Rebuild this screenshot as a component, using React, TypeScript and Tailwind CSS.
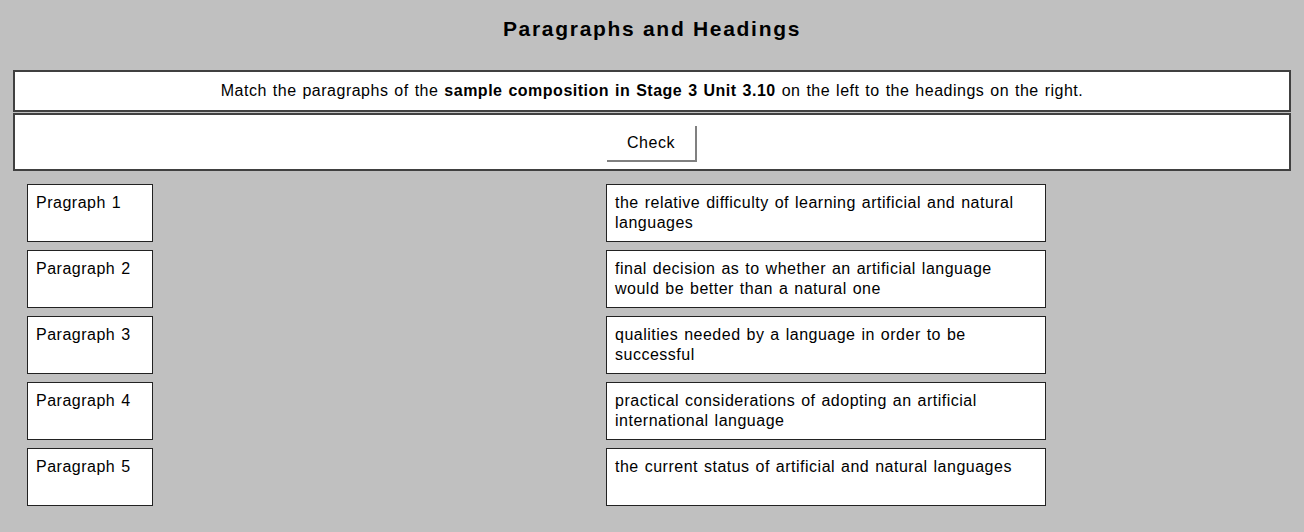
const paragraphs = ['Pragraph 1', 'Paragraph 2', 'Paragraph 3', 'Paragraph 4', 'Paragraph 5']

const headings = [
  'the relative difficulty of learning artificial and natural languages',
  'final decision as to whether an artificial language would be better than a natural one',
  'qualities needed by a language in order to be successful',
  'practical considerations of adopting an artificial international language',
  'the current status of artificial and natural languages',
]

export default function App() {
  return (
    <div
      className="min-h-[532px] bg-[#c0c0c0] pb-6 text-[16px] tracking-[0.5px] [word-spacing:1px] text-black"
      style={{ fontFamily: '"Liberation Sans", Arial, sans-serif' }}
    >
      <h1 className="flex h-[70px] items-start justify-center pt-[13px] text-[21px] font-bold tracking-[1.7px] [word-spacing:0px]">
        Paragraphs and Headings
      </h1>

      <div className="mx-[13px] flex h-[42px] items-center justify-center border-2 border-[#404040] bg-white">
        <p>
          Match the paragraphs of the <b>sample composition in Stage 3 Unit 3.10</b> on the left to the
          headings on the right.
        </p>
      </div>

      <div className="mx-[13px] mt-[1px] flex h-[58px] items-center justify-center border-2 border-[#404040] bg-white">
        <button className="mt-[3px] h-[36px] w-[90px] border-r-2 border-b-2 border-[#808080] bg-white text-[16px] tracking-[0.5px]">
          Check
        </button>
      </div>

      <div className="mt-[13px] flex">
        <div className="ml-[27px] flex flex-col gap-[8px]">
          {paragraphs.map((p) => (
            <div key={p} className="h-[58px] w-[126px] border border-[#222] bg-white px-[8px] pt-[8px] leading-[20px]">
              {p}
            </div>
          ))}
        </div>
        <div className="ml-[453px] flex flex-col gap-[8px]">
          {headings.map((h) => (
            <div key={h} className="h-[58px] w-[440px] border border-[#222] bg-white pl-[8px] pr-[22px] pt-[8px] leading-[20px]">
              {h}
            </div>
          ))}
        </div>
      </div>
    </div>
  )
}
